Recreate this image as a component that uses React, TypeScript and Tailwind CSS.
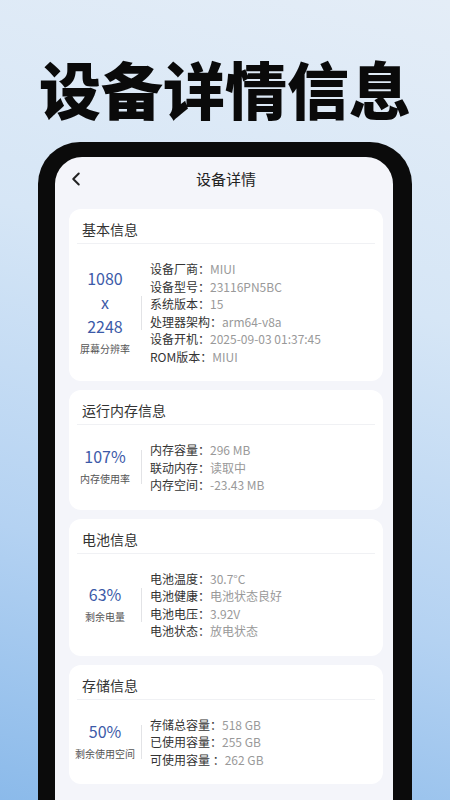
import { ChevronLeft } from 'lucide-react';

interface Row {
  label: string;
  value: string;
}

interface Section {
  title: string;
  big: string[];
  caption: string;
  rows: Row[];
}

const sections: Section[] = [
  {
    title: '基本信息',
    big: ['1080', 'x', '2248'],
    caption: '屏幕分辨率',
    rows: [
      { label: '设备厂商：', value: 'MIUI' },
      { label: '设备型号：', value: '23116PN5BC' },
      { label: '系统版本：', value: '15' },
      { label: '处理器架构：', value: 'arm64-v8a' },
      { label: '设备开机：', value: '2025-09-03 01:37:45' },
      { label: 'ROM版本：', value: 'MIUI' },
    ],
  },
  {
    title: '运行内存信息',
    big: ['107%'],
    caption: '内存使用率',
    rows: [
      { label: '内存容量：', value: '296 MB' },
      { label: '联动内存：', value: '读取中' },
      { label: '内存空间：', value: '-23.43 MB' },
    ],
  },
  {
    title: '电池信息',
    big: ['63%'],
    caption: '剩余电量',
    rows: [
      { label: '电池温度：', value: '30.7°C' },
      { label: '电池健康：', value: '电池状态良好' },
      { label: '电池电压：', value: '3.92V' },
      { label: '电池状态：', value: '放电状态' },
    ],
  },
  {
    title: '存储信息',
    big: ['50%'],
    caption: '剩余使用空间',
    rows: [
      { label: '存储总容量：', value: '518 GB' },
      { label: '已使用容量：', value: '255 GB' },
      { label: '可使用容量 ：', value: '262 GB' },
    ],
  },
];

function InfoCard({ section }: { section: Section }) {
  return (
    <div className="bg-white rounded-[12px]">
      <div className="px-[8px]">
        <div className="h-[34px] pt-[10px] px-[5px] text-[14px] leading-[20px] text-[#333]">
          {section.title}
        </div>
        <div className="h-px bg-[#f0f1f4]" />
      </div>
      <div className="flex items-center py-[16px]">
        <div className="w-[72px] flex flex-col items-center">
          {section.big.map((b, i) => (
            <div key={i} className="text-[16px] leading-[24px] text-[#3c5aa8]">
              {b}
            </div>
          ))}
          <div className="text-[10px] leading-[22px] text-[#555] whitespace-nowrap">
            {section.caption}
          </div>
        </div>
        <div className="w-px h-[34px] bg-[#e2e3e6]" />
        <div className="ml-[8px] flex flex-col">
          {section.rows.map((r, i) => (
            <div key={i} className="text-[12px] leading-[17.5px] whitespace-pre">
              <span className="text-[#333]">{r.label}</span>
              <span className="text-[#999]">{r.value}</span>
            </div>
          ))}
        </div>
      </div>
    </div>
  );
}

export default function App() {
  return (
    <div
      className="w-[450px] h-[800px] overflow-hidden bg-[linear-gradient(195deg,#e4edf7_0%,#d6e6f6_35%,#b4d2f2_70%,#8bbaea_100%)]"
      style={{ fontFamily: '"Noto Sans CJK SC", "Noto Sans", sans-serif' }}
    >
      <div className="h-[142px] pt-[55px] flex justify-center">
        <h1 className="text-[62px] leading-[66px] font-black text-[#0a0a0a]">设备详情信息</h1>
      </div>
      <div className="ml-[38px] w-[374px] h-[700px] bg-[#0b0b0b] rounded-t-[42px] pt-[15px] pl-[17px] pr-[19px]">
        <div className="h-full bg-[#f4f5fa] rounded-t-[27px] pl-[14px] pr-[10px]">
          <div className="relative h-[44px] flex items-center justify-center">
            <ChevronLeft
              className="absolute left-[-4px] top-[11px] text-[#222]"
              size={22}
              strokeWidth={2.2}
            />
            <span className="text-[15px] text-[#222]">设备详情</span>
          </div>
          <div className="mt-[8px] flex flex-col gap-[9px]">
            {sections.map((s) => (
              <InfoCard key={s.title} section={s} />
            ))}
          </div>
        </div>
      </div>
    </div>
  );
}
